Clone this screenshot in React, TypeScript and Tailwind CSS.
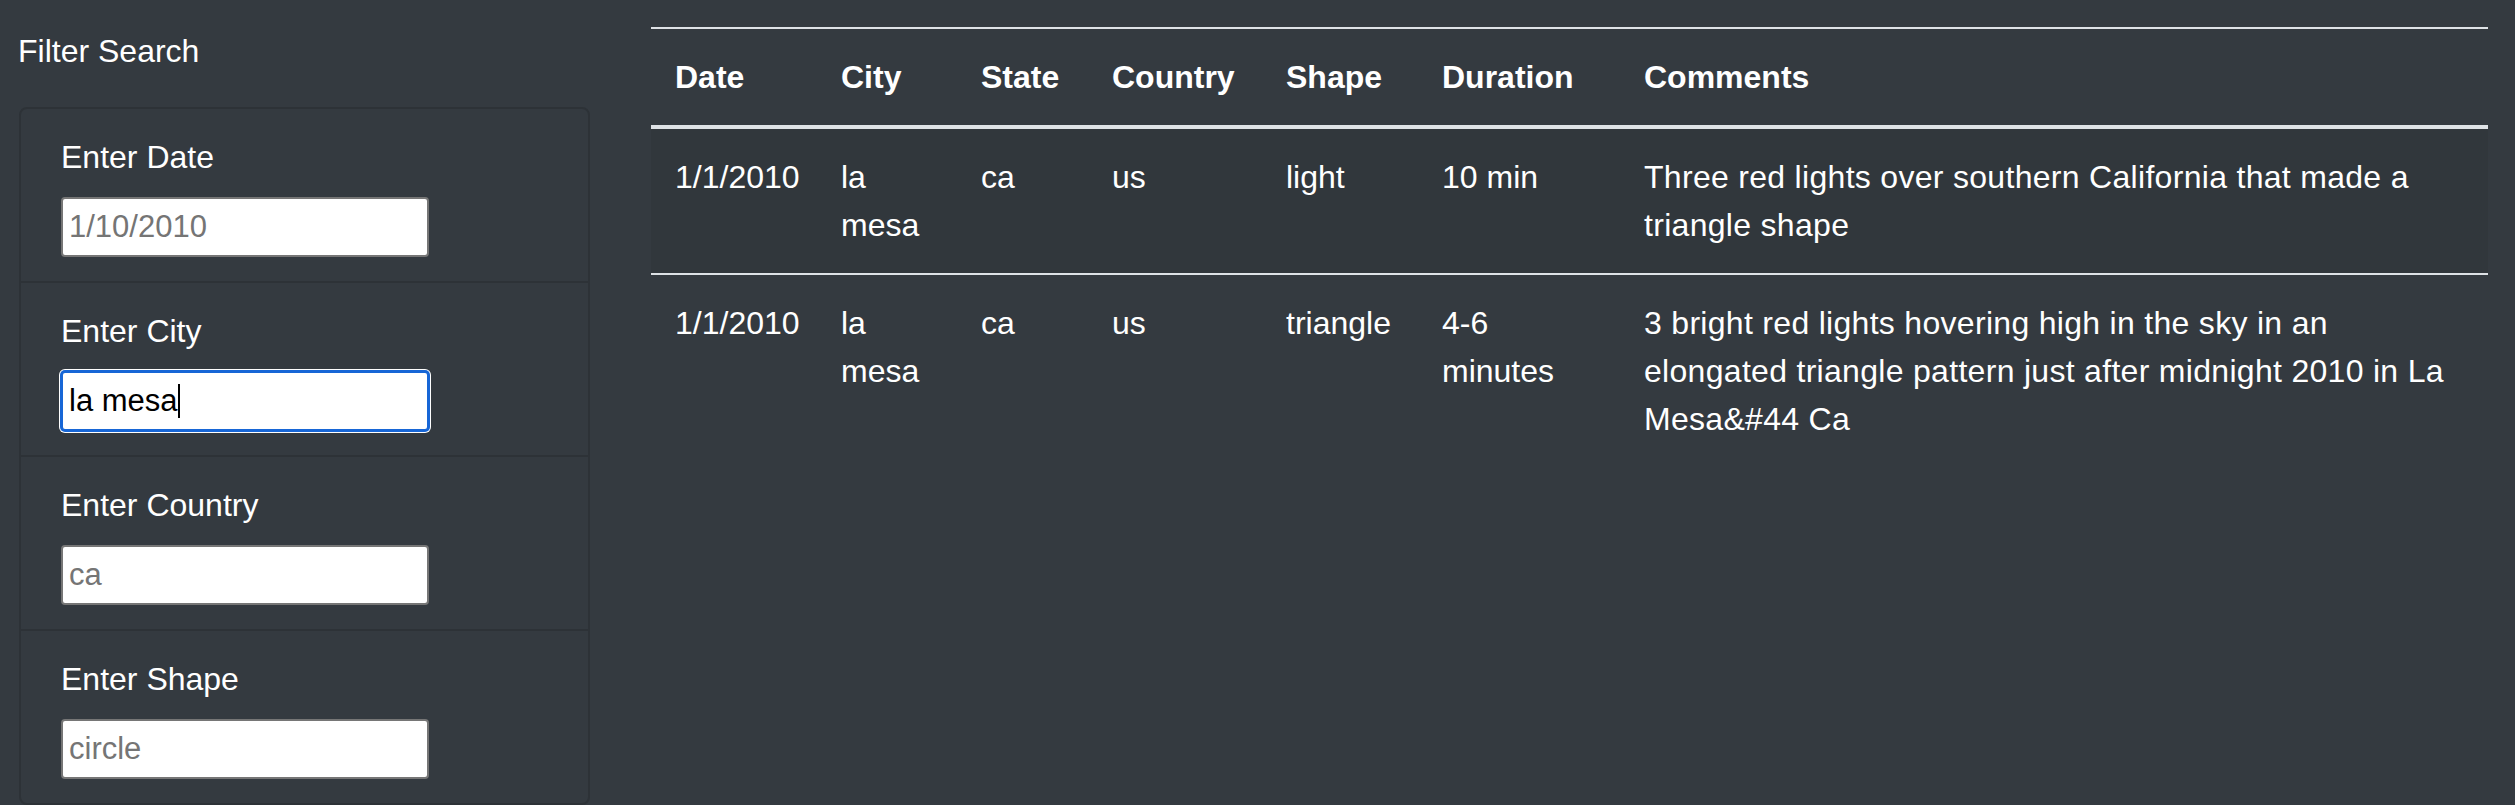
import React from 'react';

const sightings = [
    {
        date: '1/1/2010',
        city: 'la mesa',
        state: 'ca',
        country: 'us',
        shape: 'light',
        duration: '10 min',
        comments: 'Three red lights over southern California that made a triangle shape',
    },
    {
        date: '1/1/2010',
        city: 'la mesa',
        state: 'ca',
        country: 'us',
        shape: 'triangle',
        duration: '4-6 minutes',
        comments: '3 bright red lights hovering high in the sky in an elongated triangle pattern just after midnight 2010 in La Mesa&#44 Ca',
    },
];

const columns = ['Date', 'City', 'State', 'Country', 'Shape', 'Duration', 'Comments'];
const colWidths = ['w-[166px]', 'w-[140px]', 'w-[131px]', 'w-[174px]', 'w-[156px]', 'w-[202px]', 'w-auto'];

function FilterItem({ label, placeholder, last }: { label: string; placeholder: string; last?: boolean }) {
    return (
        <li className={`px-[40px] pt-[24px] pb-[24px] ${last ? '' : 'border-b-2 border-[#2d3237]'}`}>
            <label className="block leading-[48px] mb-[16px]">{label}</label>
            <input
                type="text"
                placeholder={placeholder}
                className="block w-[368px] h-[60px] px-[6px] bg-white text-black text-[31px] border-2 border-[#767676] rounded-[4px] placeholder:text-[#757575] outline-none"
            />
        </li>
    );
}

export default function App() {
    return (
        <div
            className="min-h-screen bg-[#343a40] text-white text-[32px] flex pl-[19px] pr-[27px]"
            style={{ fontFamily: '"Liberation Sans", Arial, sans-serif' }}
        >
            {/* Боковая панель фильтров */}
            <aside className="w-[571px] shrink-0 pt-[27px]">
                <p className="leading-[48px] -ml-px mb-[32px]">Filter Search</p>
                <ul className="border-2 border-[#2d3237] rounded-[8px]">
                    <FilterItem label="Enter Date" placeholder="1/10/2010" />
                    <li className="px-[40px] pt-[24px] pb-[24px] border-b-2 border-[#2d3237]">
                        <label className="block leading-[48px] mb-[16px]">Enter City</label>
                        <div
                            role="textbox"
                            className="flex items-center w-[368px] h-[60px] px-[6px] bg-white text-black text-[31px] border-2 border-[#1766d6] rounded-[4px] shadow-[0_0_0_1px_#1766d6,0_0_0_2px_#ffffff]"
                        >
                            <span className="whitespace-pre">la mesa</span>
                            <span className="inline-block w-[2px] h-[34px] bg-black" />
                        </div>
                    </li>
                    <FilterItem label="Enter Country" placeholder="ca" />
                    <FilterItem label="Enter Shape" placeholder="circle" last />
                </ul>
            </aside>

            {/* Таблица результатов */}
            <main className="flex-1 ml-[61px] pt-[27px]">
                <table className="w-full table-fixed border-collapse">
                    <colgroup>
                        {colWidths.map((w, i) => (
                            <col key={i} className={w} />
                        ))}
                    </colgroup>
                    <thead>
                        <tr className="border-t-2 border-b-4 border-[#dee2e6]">
                            {columns.map((c) => (
                                <th key={c} className="text-left font-bold leading-[48px] p-[24px] align-top">
                                    {c}
                                </th>
                            ))}
                        </tr>
                    </thead>
                    <tbody>
                        {sightings.map((s, i) => (
                            <tr
                                key={i}
                                className={i % 2 === 0 ? 'bg-black/5 border-b-2 border-[#dee2e6]' : ''}
                            >
                                <td className="leading-[48px] p-[24px] align-top">{s.date}</td>
                                <td className="leading-[48px] p-[24px] align-top">{s.city}</td>
                                <td className="leading-[48px] p-[24px] align-top">{s.state}</td>
                                <td className="leading-[48px] p-[24px] align-top">{s.country}</td>
                                <td className="leading-[48px] p-[24px] align-top">{s.shape}</td>
                                <td className="leading-[48px] p-[24px] align-top">{s.duration}</td>
                                <td className="leading-[48px] p-[24px] align-top tracking-[0.3px]">{s.comments}</td>
                            </tr>
                        ))}
                    </tbody>
                </table>
            </main>
        </div>
    );
}
